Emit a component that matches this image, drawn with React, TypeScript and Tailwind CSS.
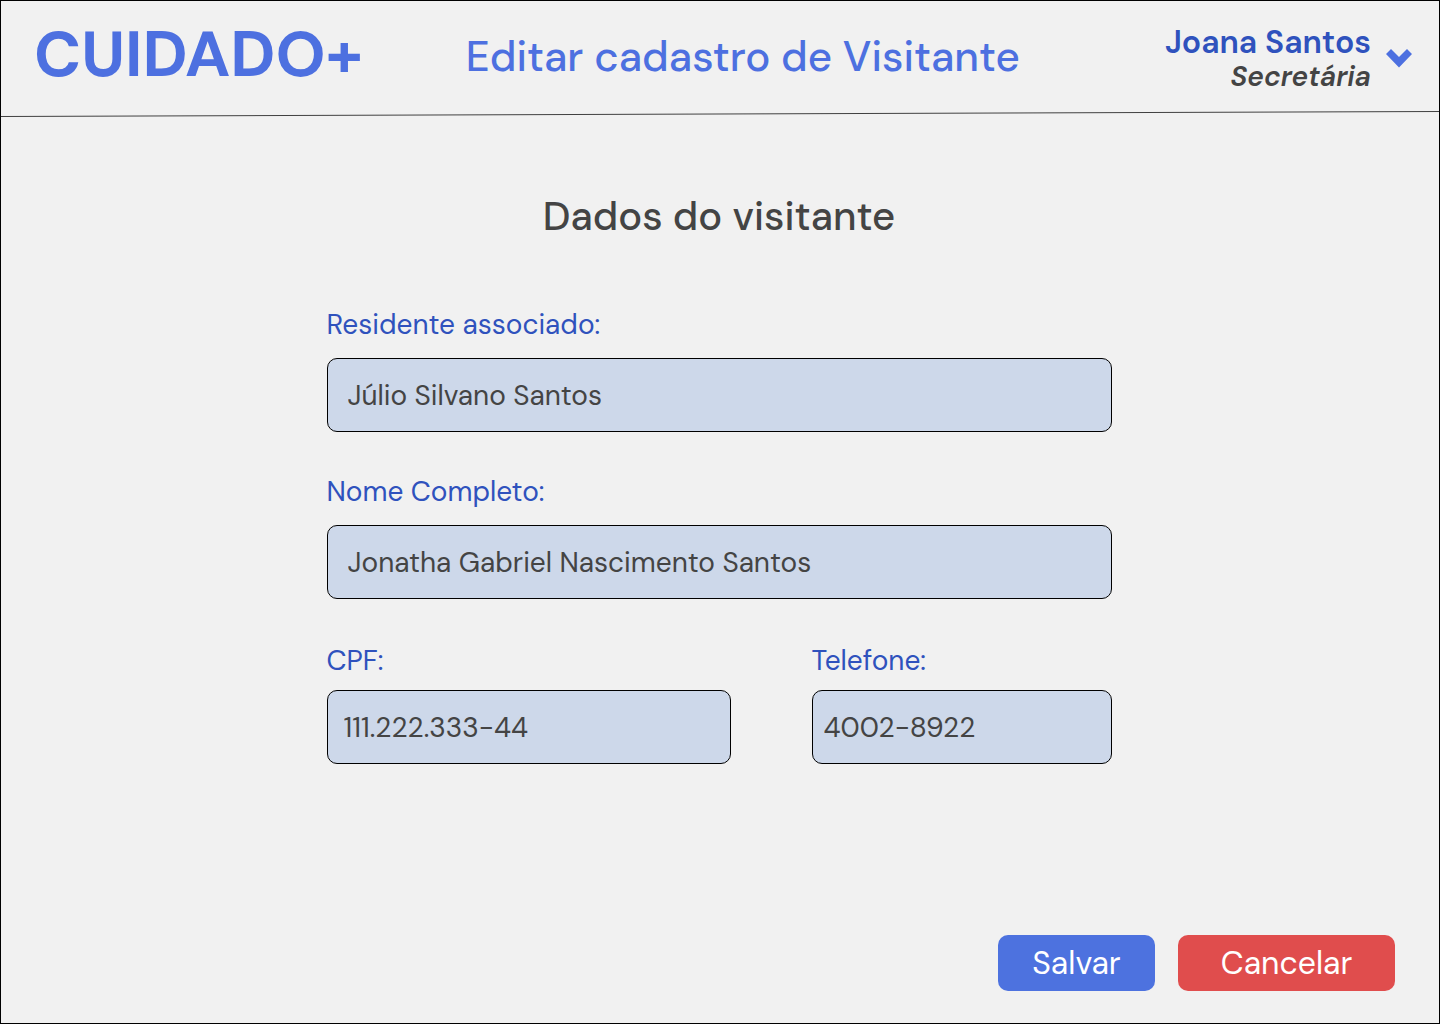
import React from "react";

type FieldProps = {
  id: string;
  label: string;
  value: string;
  gap: string;
  padding: string;
  type?: string;
};

function Field({ id, label, value, gap, padding, type = "text" }: FieldProps) {
  return (
    <div className={`flex min-w-0 flex-col ${gap}`}>
      <label htmlFor={id} className="text-[28px] leading-9 text-[#2f52bd]">
        {label}
      </label>
      <input
        id={id}
        type={type}
        defaultValue={value}
        className={`h-[74px] w-full rounded-[10px] border border-black bg-[#cdd8ea] text-[28px] text-[#444444] ${padding}`}
      />
    </div>
  );
}

export default function App() {
  return (
    <div className="flex min-h-screen flex-col border border-black bg-[#f1f1f1] font-['DM_Sans','Inter',sans-serif] text-[#444444]">
      <header className="relative flex h-[116px] items-start pr-[27px] pl-[33px]">
        <div className="pt-3.5 text-[64px] leading-[80px] font-bold text-[#4d70e0]">CUIDADO+</div>
        <h1 className="ml-[103px] pt-8 text-[42px] leading-[48px] font-medium text-[#4d70e0]">
          Editar cadastro de Visitante
        </h1>
        <button type="button" className="ml-auto flex items-center gap-[15px] pt-[23px] text-right">
          <span className="flex flex-col">
            <span className="text-[32px] leading-9 font-semibold text-[#2f52bd]">Joana Santos</span>
            <span className="text-[28px] leading-[34px] font-semibold italic">Secretária</span>
          </span>
          <svg width="26" height="20" viewBox="0 0 26 20" fill="#4d70e0" aria-hidden="true">
            <path d="M5 0L13 8L21 0L26 5L13 18.500L0 5Z" />
          </svg>
        </button>
        <svg
          className="absolute bottom-0 left-0 h-[6px] w-full"
          viewBox="0 0 1438 6"
          preserveAspectRatio="none"
          aria-hidden="true"
        >
          <path d="M0 5.500L1438 .5" stroke="#404040" />
        </svg>
      </header>

      <main className="flex flex-1 flex-col">
        <h2 className="mt-[73px] pr-0.5 text-center text-[40px] leading-[52px] font-medium">Dados do visitante</h2>
        <form className="flex flex-1 flex-col">
          <div className="mt-[65px] flex justify-center pr-0.5">
            <div className="flex w-full max-w-[785px] flex-col gap-[42px]">
              <Field
                id="residente"
                label="Residente associado:"
                value="Júlio Silvano Santos"
                gap="gap-[15px]"
                padding="px-5"
              />
              <Field
                id="nome"
                label="Nome Completo:"
                value="Jonatha Gabriel Nascimento Santos"
                gap="gap-[15px]"
                padding="px-5"
              />
              <div className="grid grid-cols-[404fr_300fr] gap-x-[81px] pt-0.5">
                <Field id="cpf" label="CPF:" value="111.222.333-44" gap="gap-[11px]" padding="px-4" />
                <Field
                  id="telefone"
                  label="Telefone:"
                  value="4002-8922"
                  gap="gap-[11px]"
                  padding="px-[11px]"
                  type="tel"
                />
              </div>
            </div>
          </div>
          <div className="mt-auto flex justify-end gap-[23px] pr-11 pb-8 text-[32px] leading-10 text-white">
            <button type="submit" className="h-14 w-[157px] rounded-[10px] bg-[#4d72df]">
              Salvar
            </button>
            <button type="button" className="h-14 w-[217px] rounded-[10px] bg-[#e04d4d]">
              Cancelar
            </button>
          </div>
        </form>
      </main>
    </div>
  );
}
